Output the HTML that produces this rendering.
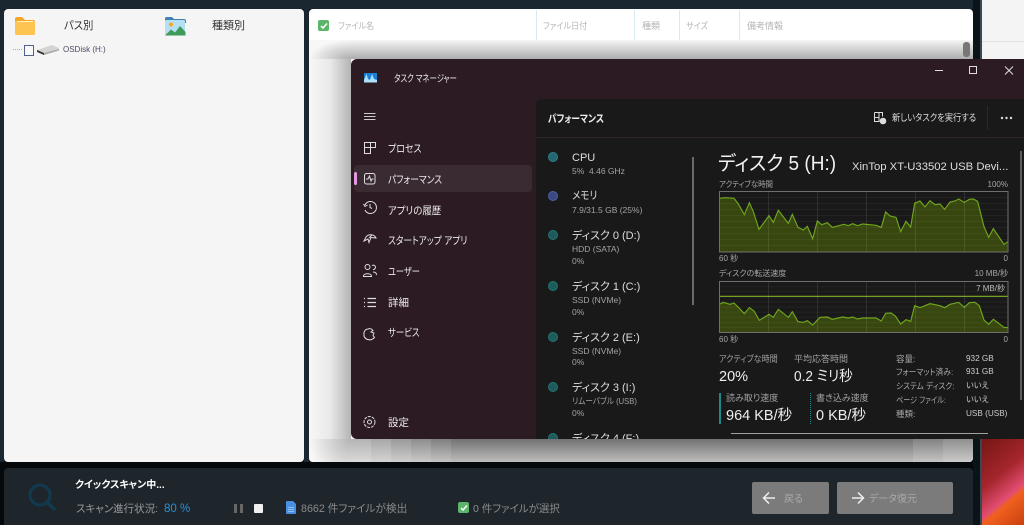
<!DOCTYPE html>
<html lang="ja"><head><meta charset="utf-8"><title>タスク マネージャー</title>
<style>
html,body{margin:0;padding:0;width:1024px;height:525px;overflow:hidden;background:#06090b}
body{position:relative;font-family:"Liberation Sans","Noto Sans CJK JP",sans-serif;font-feature-settings:"palt" 1;filter:blur(.3px)}
div,svg{position:absolute}
.t{white-space:pre;line-height:14px;height:14px;font-size:9px;margin-top:1px;transform-origin:0 50%}
.r{text-align:right}
.nav{left:37px;font-size:10.5px;color:#eee}
.n{left:221px;font-size:11px;color:#ddd}
.s{left:221px;font-size:8.5px;color:#a3a3a3}
.l{color:#a5a5a5;font-size:8px}
.h{color:#a0a0a0;font-size:9px}
.v{color:#eee;font-size:14.5px;line-height:18px;height:18px}
.p{color:#a8a8a8;font-size:8.5px}
.w{color:#ccc;font-size:8.2px;left:615px}
.dot{left:197px;width:8px;height:8px;border-radius:50%;background:#1f5a5c;border:1.5px solid #1f7670}
.c{color:#b5b5b5;font-size:9px;top:9px}
.d{top:1px;width:1px;height:30px;background:#d8ebf4}
.b{top:399px;height:23px}
</style></head><body>
<div style="left:0;top:0;width:1024px;height:9px;background:#1a2730"></div>
<div style="left:0;top:9px;width:4px;height:453px;background:#1a2730"></div>
<div style="left:304px;top:9px;width:5px;height:453px;background:#1a2730"></div>
<div style="left:973px;top:0;width:7px;height:525px;background:#0a1418"></div>
<div style="left:980px;top:0;width:2px;height:525px;background:#3b4a52"></div>
<div style="left:982px;top:0;width:42px;height:60px;background:#f4f4f4"></div>
<div style="left:982px;top:41px;width:42px;height:1px;background:#e2e2e2"></div>
<div style="left:982px;top:438px;width:42px;height:87px;background:linear-gradient(140deg,#741614 0%,#a5262c 42%,#e24d72 66%,#f0601f 71%,#c93f10 100%)"></div>

<!-- left panel -->
<div style="left:4px;top:9px;width:300px;height:453px;background:#f5f5f5;border-radius:4px"></div>
<svg style="left:14px;top:16px" width="22" height="20" viewBox="0 0 22 20"><path d="M1 3a2 2 0 0 1 2-2h5l3 3h8a2 2 0 0 1 2 2v2H1z" fill="#f5a623"/><rect x="1" y="5" width="20" height="14" rx="1.5" fill="#fdc44f"/><rect x="3" y="5" width="16" height="1" fill="#fff0c8"/></svg>
<svg style="left:165px;top:17px" width="21" height="19" viewBox="0 0 21 19"><path d="M0 2a2 2 0 0 1 2-2h5l2 2h10a2 2 0 0 1 2 2v2H0z" fill="#3f7fb5"/><rect x="0" y="3" width="20" height="15.5" rx="1" fill="#b5e0f4"/><circle cx="6" cy="7.5" r="2" fill="#f6a821"/><path d="M0 18.5l6-6 4 3 5-6.5 5.5 6v3.5z" fill="#3f9b58"/></svg>
<div class="t" style="left:64px;top:18px;font-size:11px;color:#333;transform:scaleX(.94)">パス別</div>
<div class="t" style="left:212px;top:18px;font-size:11px;color:#333">種類別</div>
<div style="left:13px;top:49px;width:9px;border-top:1px dotted #aaa"></div>
<div style="left:24px;top:45px;width:8px;height:9px;border:1px solid #52608f;background:#f8f8f8"></div>
<svg style="left:36px;top:44px" width="24" height="12" viewBox="0 0 24 12"><path d="M1 6 16 1l7 3v1L8 9z" fill="#d4d4d4"/><path d="M1 6l7 3v2L1 8z" fill="#333"/><path d="M8 9l15-4v1.5L8 11z" fill="#a9a9a9"/></svg>
<div class="t" style="left:63px;top:42px;font-size:8px;color:#4a4a68">OSDisk (H:)</div>

<!-- right panel -->
<div style="left:309px;top:9px;width:664px;height:453px;background:#fff;border-radius:4px;overflow:hidden">
  <div style="left:0;top:31px;width:664px;height:422px;overflow:hidden;background:#f7f7f7">
    <div style="left:42px;top:0;width:622px;height:19px;background:linear-gradient(to bottom,#f5f5f5,#adadad)"></div>
    <div style="left:0;top:19px;width:42px;height:380px;background:linear-gradient(to right,#f7f7f7,#e9e9e9 50%,#b4b4b4)"></div>
    <div class="b" style="left:42px;width:20px;background:linear-gradient(#b4b4b4,#dadada)"></div>
    <div class="b" style="left:62px;width:20px;background:linear-gradient(#a7a7a7,#d4d4d4)"></div>
    <div class="b" style="left:82px;width:20px;background:linear-gradient(#9a9a9a,#cecece)"></div>
    <div class="b" style="left:102px;width:20px;background:linear-gradient(#8d8d8d,#c9c9c9)"></div>
    <div class="b" style="left:122px;width:20px;background:linear-gradient(#7f7f7f,#c3c3c3)"></div>
    <div class="b" style="left:142px;width:462px;background:linear-gradient(#727272,#bdbdbd)"></div>
    <div class="b" style="left:604px;width:30px;background:linear-gradient(#828282,#c4c4c4)"></div>
    <div class="b" style="left:634px;width:30px;background:linear-gradient(#8f8f8f,#cacaca)"></div>
    <div style="left:0;top:0;width:42px;height:19px;background:radial-gradient(ellipse 42px 19px at 100% 100%,#adadad,#f7f7f7)"></div>
    <div class="b" style="left:0;width:42px;background:radial-gradient(circle 42px at 100% 0,#b4b4b4,#f7f7f7)"></div>
    <div style="left:654px;top:2px;width:7px;height:15px;border-radius:3px;background:#777"></div>
  </div>
  <div style="left:9px;top:11px;width:11px;height:11px;border-radius:2px;background:#5cb56b"></div>
  <svg style="left:11px;top:13px" width="8" height="8" viewBox="0 0 8 8"><path d="M1 4l2 2 4-4.5" fill="none" stroke="#fff" stroke-width="1.5"/></svg>
  <div class="t c" style="left:29px;transform:scaleX(.9)">ファイル名</div>
  <div class="d" style="left:227px"></div><div class="d" style="left:325px"></div><div class="d" style="left:370px"></div><div class="d" style="left:430px"></div>
  <div class="t c" style="left:234px;transform:scaleX(.9)">ファイル日付</div>
  <div class="t c" style="left:333px">種類</div>
  <div class="t c" style="left:377px;transform:scaleX(.9)">サイズ</div>
  <div class="t c" style="left:438px">備考情報</div>
</div>

<!-- task manager -->
<div style="left:351px;top:59px;width:673px;height:380px;background:#2c1b22;border-radius:6px 0 0 6px;overflow:hidden">
  <svg style="left:13px;top:13px" width="14" height="11" viewBox="0 0 14 11"><rect x="0" y="1" width="13" height="9.5" fill="#1b7fd6"/><path d="M0 8 2.5 2 4 7 6 8 8 2l2 5 3 1v2.5H0z" fill="#aee2fb"/></svg>
  <div class="t" style="left:43px;top:13px;font-size:10px;color:#e8e8e8;transform:scaleX(.74)">タスク マネージャー</div>
  <svg style="left:580px;top:5px" width="92" height="14" viewBox="0 0 92 14" fill="none" stroke="#ddd" stroke-width="1"><path d="M4 6.5h8"/><rect x="38.5" y="2.5" width="7" height="7"/><path d="M74 2.5l8 8M82 2.5l-8 8"/></svg>
  <svg style="left:13px;top:52px" width="12" height="12" viewBox="0 0 12 12" stroke="#ccc" stroke-width="1"><path d="M0 2.5h11.5M0 5.5h11.5M0 8.5h11.5"/></svg>
  <div style="left:3px;top:106px;width:178px;height:27px;background:#3a2a31;border-radius:4px"></div>
  <div style="left:3px;top:113px;width:2.5px;height:13px;background:#e49ae0;border-radius:2px"></div>
  <svg style="left:10px;top:80px" width="18" height="290" viewBox="0 0 18 290" fill="none" stroke="#ddd" stroke-width="1">
    <path d="M3.5 3.5h11v5h-5v6h-6zM3.5 8.5h6M9.5 3.5v5"/>
    <rect x="3.5" y="34.5" width="10.5" height="10.5" rx="2"/><path d="M5 40h2l1.5-3 1.5 5 1-2h1.5"/>
    <path d="M4 66a6 6 0 1 1 0 5M2.5 65l1.5 2.5L6.5 66M9 65v3.5l2 1"/>
    <path d="M3 102l2-4a6 6 0 0 1 10 1l-5-.5-2 5-1-3.5zM8 99l3-3"/>
    <circle cx="6.5" cy="128" r="2.5"/><path d="M2.5 137c0-3 8-3 8 0v.5h-8zM11 126.5a2.2 2.2 0 1 1 1 4M12 133c2 0 3.5 1 3.5 3"/>
    <path d="M6.5 159.5h8.5M6.5 163.5h8.5M6.5 167.5h8.5M3 159.5h1M3 163.5h1M3 167.5h1" stroke-width="1.2"/>
    <path d="M7 190c2-1 4 0 5 1.5l-2 1.5 3 1-1 2.5 1.5 2c-2 2-4 3-6 2-3 0-5-3-4.5-5-.5-3 1.5-5.5 4-5.5z"/>
    <circle cx="8.5" cy="283" r="2"/><circle cx="8.5" cy="283" r="5.5" stroke-dasharray="3 1"/>
  </svg>
  <div class="t nav" style="top:82px;transform:scaleX(.85)">プロセス</div>
  <div class="t nav" style="top:113px;transform:scaleX(.83)">パフォーマンス</div>
  <div class="t nav" style="top:144px;transform:scaleX(.9)">アプリの履歴</div>
  <div class="t nav" style="top:174px;transform:scaleX(.83)">スタートアップ アプリ</div>
  <div class="t nav" style="top:205px;transform:scaleX(.78)">ユーザー</div>
  <div class="t nav" style="top:236px">詳細</div>
  <div class="t nav" style="top:266px;transform:scaleX(.8)">サービス</div>
  <div class="t nav" style="top:356px">設定</div>

  <div style="left:185px;top:40px;width:488px;height:340px;background:#191919;border-radius:6px 0 0 0;overflow:hidden"></div>
  <div style="left:185px;top:78px;width:488px;height:1px;background:#2c2426"></div>
  <div class="t" style="left:197px;top:52px;font-size:10.5px;font-weight:bold;color:#eee;transform:scaleX(.83)">パフォーマンス</div>
  <svg style="left:523px;top:53px" width="13" height="13" viewBox="0 0 13 13" fill="none" stroke="#ddd"><path d="M.5 .5h8v4M.5 .5v9h5M.5 5.5h5M5 .5v9"/><circle cx="9" cy="9" r="2.8" fill="#ddd"/></svg>
  <div class="t" style="left:541px;top:52px;font-size:9.5px;color:#ddd;transform:scaleX(.87)">新しいタスクを実行する</div>
  <div style="left:636px;top:47px;width:1px;height:24px;background:#2a2a2a"></div>
  <svg style="left:649px;top:57px" width="14" height="4" viewBox="0 0 14 4" fill="#ddd"><circle cx="2" cy="2" r="1.2"/><circle cx="6.5" cy="2" r="1.2"/><circle cx="11" cy="2" r="1.2"/></svg>

  <div class="dot" style="top:93px;background:#25666f;border-color:#2d8190"></div>
  <div class="dot" style="top:132px;background:#3a4a80;border-color:#4f61a8"></div>
  <div class="dot" style="top:171px"></div><div class="dot" style="top:222px"></div><div class="dot" style="top:273px"></div><div class="dot" style="top:323px"></div><div class="dot" style="top:374px"></div>
  <div class="t n" style="top:91px">CPU</div><div class="t s" style="top:104px">5%  4.46 GHz</div>
  <div class="t n" style="top:129px;transform:scaleX(.87)">メモリ</div><div class="t s" style="top:143px">7.9/31.5 GB (25%)</div>
  <div class="t n" style="top:169px">ディスク 0 (D:)</div><div class="t s" style="top:182px">HDD (SATA)</div><div class="t s" style="top:194px">0%</div>
  <div class="t n" style="top:220px">ディスク 1 (C:)</div><div class="t s" style="top:233px">SSD (NVMe)</div><div class="t s" style="top:245px">0%</div>
  <div class="t n" style="top:271px">ディスク 2 (E:)</div><div class="t s" style="top:284px">SSD (NVMe)</div><div class="t s" style="top:295px">0%</div>
  <div class="t n" style="top:321px">ディスク 3 (I:)</div><div class="t s" style="top:334px;transform:scaleX(.9)">リムーバブル (USB)</div><div class="t s" style="top:346px">0%</div>
  <div class="t n" style="top:372px">ディスク 4 (F:)</div>
  <div style="left:341px;top:98px;width:1.5px;height:148px;background:#6b6b6b"></div>
  <div style="left:669px;top:92px;width:1.5px;height:249px;background:#5c5c5c"></div>
  <div style="left:380px;top:374px;width:257px;height:1px;background:#a0a0a0"></div>

  <div class="t" style="left:367px;top:92px;font-size:20px;line-height:24px;height:24px;color:#f2f2f2;transform:scaleX(.95)">ディスク 5 (H:)</div>
  <div class="t" style="left:501px;top:100px;font-size:11.3px;color:#ddd">XinTop XT-U33502 USB Devi...</div>
  <div class="t l" style="left:368px;top:118px;transform:scaleX(.93)">アクティブな時間</div>
  <div class="t l r" style="left:557px;width:100px;top:118px">100%</div>
  <div class="t l" style="left:368px;top:192px">60 秒</div>
  <div class="t l r" style="left:557px;width:100px;top:192px">0</div>
  <div class="t l" style="left:368px;top:207px">ディスクの転送速度</div>
  <div class="t l r" style="left:557px;width:100px;top:207px">10 MB/秒</div>
  <div class="t l" style="left:368px;top:273px">60 秒</div>
  <div class="t l r" style="left:557px;width:100px;top:273px">0</div>

  <div class="t h" style="left:368px;top:292px;transform:scaleX(.9)">アクティブな時間</div>
  <div class="t h" style="left:443px;top:292px">平均応答時間</div>
  <div class="t v" style="left:368px;top:308px">20%</div>
  <div class="t v" style="left:443px;top:308px;transform:scaleX(.94)">0.2 ミリ秒</div>
  <div style="left:368px;top:334px;width:1.5px;height:31px;background:#1d8a8a"></div>
  <div style="left:459px;top:334px;height:31px;border-left:1.5px dotted #1d8a8a"></div>
  <div class="t h" style="left:375px;top:331px">読み取り速度</div>
  <div class="t h" style="left:465px;top:331px">書き込み速度</div>
  <div class="t v" style="left:375px;top:347px">964 KB/秒</div>
  <div class="t v" style="left:465px;top:347px">0 KB/秒</div>
  <div class="t p" style="left:545px;top:292px">容量:</div><div class="t w" style="top:292px">932 GB</div>
  <div class="t p" style="left:545px;top:305px;transform:scaleX(.92)">フォーマット済み:</div><div class="t w" style="top:305px">931 GB</div>
  <div class="t p" style="left:545px;top:319px;transform:scaleX(.9)">システム ディスク:</div><div class="t w" style="top:319px">いいえ</div>
  <div class="t p" style="left:545px;top:333px;transform:scaleX(.84)">ページ ファイル:</div><div class="t w" style="top:333px">いいえ</div>
  <div class="t p" style="left:545px;top:347px">種類:</div><div class="t w" style="top:347px">USB (USB)</div>
</div>

<!-- charts -->
<svg style="left:0;top:0" width="1024" height="525" viewBox="0 0 1024 525">
  <defs>
    <pattern id="g" x="719" y="191" width="49" height="6" patternUnits="userSpaceOnUse"><path d="M0 .5h49" stroke="#fff" stroke-opacity=".045"/><path d="M.5 0v6" stroke="#fff" stroke-opacity=".09"/></pattern>
    <pattern id="g2" x="719" y="281" width="49" height="5.1" patternUnits="userSpaceOnUse"><path d="M0 .5h49" stroke="#fff" stroke-opacity=".045"/><path d="M.5 0v6" stroke="#fff" stroke-opacity=".09"/></pattern>
  </defs>
  <g transform="translate(710,140) scale(.33333)">
    <path d="M28 175 45 173 72 175 85 192 103 224 118 188 130 215 147 268 177 227 190 247 205 211 235 250 247 223 264 262 280 270 292 259 308 296 322 243 335 254 352 248 367 262 402 253 415 257 428 251 442 257 458 252 498 256 514 262 527 216 540 228 558 232 572 275 588 244 602 261 614 190 630 183 645 201 660 182 675 194 690 192 704 208 720 186 735 183 746 177 763 187 778 178 790 177 803 184 822 260 836 292 850 266 882 313 895 304V337H28Z" fill="#37470f"/>
    <path d="M28 175 45 173 72 175 85 192 103 224 118 188 130 215 147 268 177 227 190 247 205 211 235 250 247 223 264 262 280 270 292 259 308 296 322 243 335 254 352 248 367 262 402 253 415 257 428 251 442 257 458 252 498 256 514 262 527 216 540 228 558 232 572 275 588 244 602 261 614 190 630 183 645 201 660 182 675 194 690 192 704 208 720 186 735 183 746 177 763 187 778 178 790 177 803 184 822 260 836 292 850 266 882 313 895 304" fill="none" stroke="#6ea31b" stroke-width="3.5"/>
  </g>
  <rect x="719" y="191.5" width="289" height="60.5" fill="url(#g)"/>
  <rect x="719.5" y="191.5" width="288.5" height="60.5" fill="none" stroke="#6e6e6e"/>
  <g transform="translate(710,265) scale(.33333)">
    <path d="M28 118 40 112 60 118 72 114 88 130 103 146 118 128 132 138 148 166 177 148 190 157 205 133 235 157 247 140 264 170 280 172 292 167 308 180 330 157 352 156 367 163 398 156 415 159 428 156 442 162 458 159 498 159 514 168 527 145 543 144 556 153 572 177 588 164 602 169 614 122 630 128 660 116 690 122 704 128 720 118 746 112 763 127 778 113 795 112 808 122 822 165 836 178 850 163 882 187 895 188V203H28Z" fill="#37470f"/>
    <path d="M28 118 40 112 60 118 72 114 88 130 103 146 118 128 132 138 148 166 177 148 190 157 205 133 235 157 247 140 264 170 280 172 292 167 308 180 330 157 352 156 367 163 398 156 415 159 428 156 442 162 458 159 498 159 514 168 527 145 543 144 556 153 572 177 588 164 602 169 614 122 630 128 660 116 690 122 704 128 720 118 746 112 763 127 778 113 795 112 808 122 822 165 836 178 850 163 882 187 895 188" fill="none" stroke="#6ea31b" stroke-width="3.5"/>
    <path d="M28 94H895" stroke="#7cb020" stroke-width="3.5"/>
  </g>
  <rect x="719" y="281.5" width="289" height="51" fill="url(#g2)"/>
  <rect x="719.5" y="281.5" width="288.5" height="51" fill="none" stroke="#6e6e6e"/>
</svg>
<div class="t l r" style="left:905px;width:100px;top:281px;color:#bbb">7 MB/秒</div>

<!-- bottom bar -->
<div style="left:4px;top:468px;width:969px;height:57px;background:#1e262c;border-radius:4px 4px 0 0"></div>
<svg style="left:26px;top:482px" width="32" height="32" viewBox="0 0 32 32" fill="none" stroke="#113a4f" stroke-width="3"><circle cx="14" cy="13" r="10"/><path d="M21.5 20.5 29 28" stroke-width="3.5"/></svg>
<div class="t" style="left:75px;top:478px;font-size:10px;font-weight:bold;color:#fff">クイックスキャン中...</div>
<div class="t" style="left:76px;top:501px;font-size:10.5px;color:#999">スキャン進行状況:</div>
<div class="t" style="left:164px;top:501px;font-size:11.5px;color:#2a8fd6">80 %</div>
<div style="left:234px;top:504px;width:3px;height:9px;background:#666"></div>
<div style="left:240px;top:504px;width:3px;height:9px;background:#666"></div>
<div style="left:254px;top:504px;width:9px;height:9px;background:#f0f0f0;border-radius:1px"></div>
<svg style="left:286px;top:501px" width="10" height="13" viewBox="0 0 10 13"><path d="M1 0h6l3 3v9a1 1 0 0 1-1 1H1a1 1 0 0 1-1-1V1a1 1 0 0 1 1-1z" fill="#4a90e2"/><path d="M2 6.5h6M2 8.5h6M2 10.5h6" stroke="#a8cdf5" stroke-width=".8"/></svg>
<div class="t" style="left:301px;top:501px;font-size:10.7px;color:#8a8a8a">8662 件ファイルが検出</div>
<div style="left:458px;top:502px;width:11px;height:11px;border-radius:2px;background:#5cb56b"></div>
<svg style="left:460px;top:504px" width="8" height="8" viewBox="0 0 8 8"><path d="M1 4l2 2 4-4.5" fill="none" stroke="#fff" stroke-width="1.5"/></svg>
<div class="t" style="left:473px;top:501px;font-size:10.5px;color:#8a8a8a">0 件ファイルが選択</div>
<div style="left:752px;top:482px;width:77px;height:32px;background:#7b7b7b;border-radius:2px"></div>
<div style="left:837px;top:482px;width:116px;height:32px;background:#7b7b7b;border-radius:2px"></div>
<svg style="left:762px;top:491px" width="14" height="14" viewBox="0 0 14 14" fill="none" stroke="#eee" stroke-width="1.5"><path d="M13 7H2M7 1.5 1.5 7 7 12.5"/></svg>
<svg style="left:851px;top:491px" width="14" height="14" viewBox="0 0 14 14" fill="none" stroke="#eee" stroke-width="1.5"><path d="M1 7h11M7 1.5 12.5 7 7 12.5"/></svg>
<div class="t" style="left:784px;top:492px;font-size:10px;color:#aaa">戻る</div>
<div class="t" style="left:869px;top:492px;font-size:10px;color:#aaa">データ復元</div>
</body></html>
